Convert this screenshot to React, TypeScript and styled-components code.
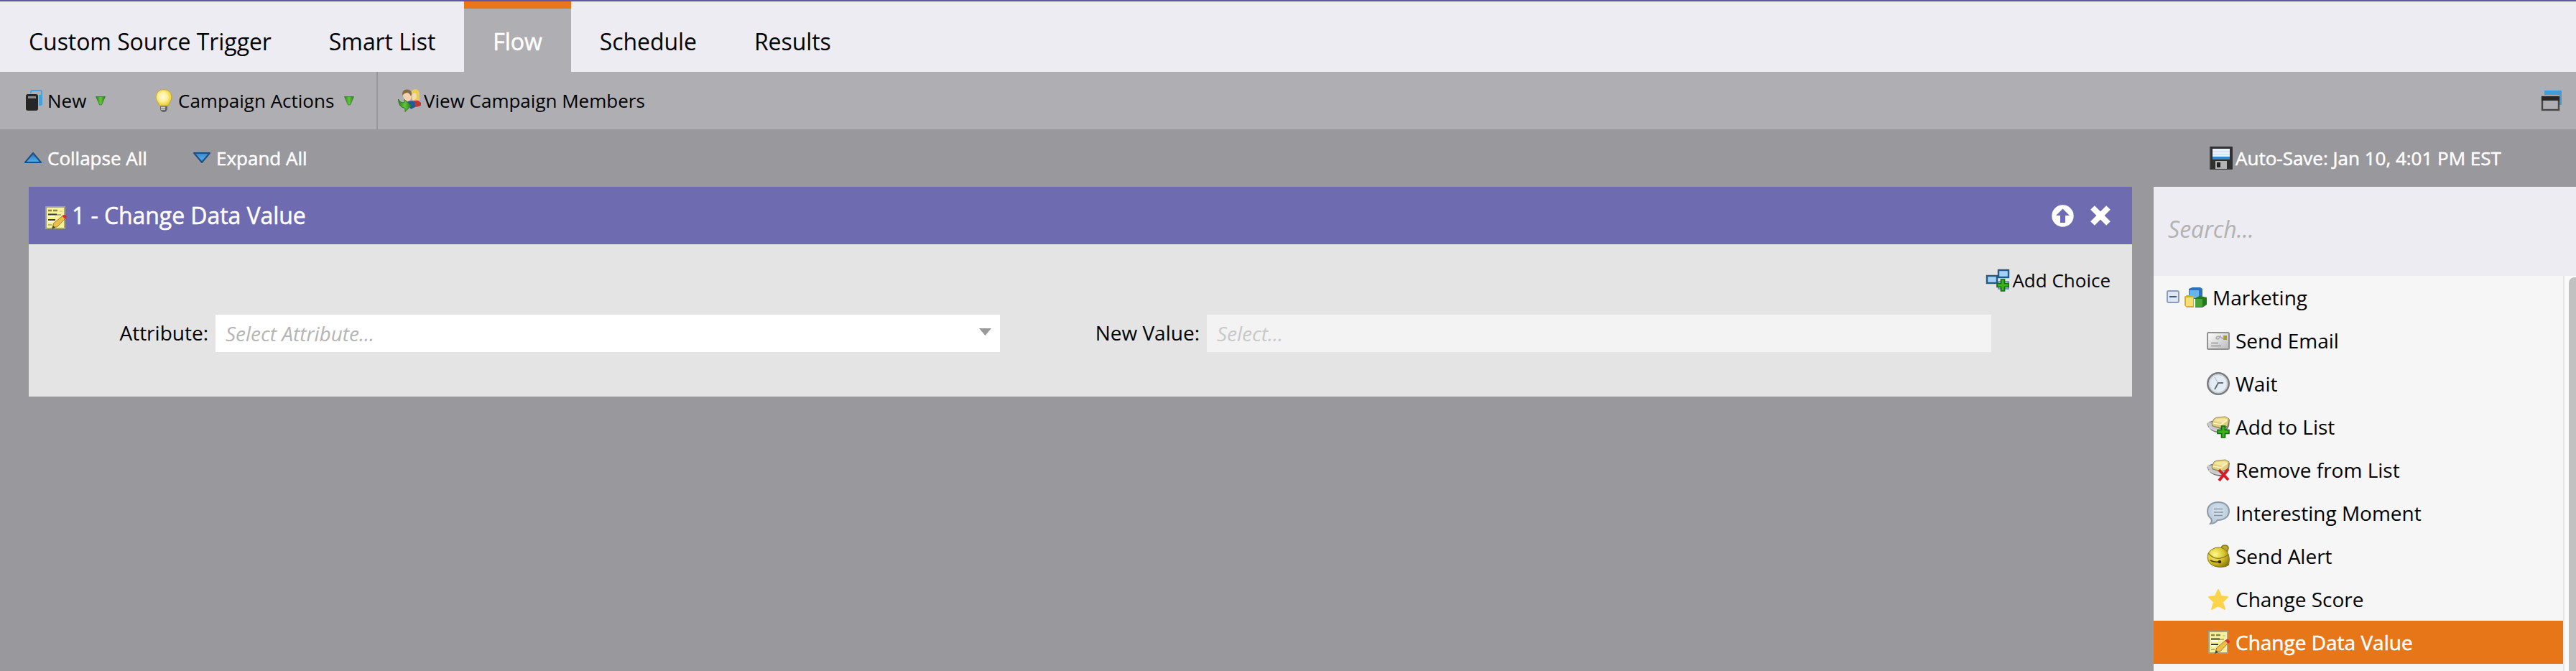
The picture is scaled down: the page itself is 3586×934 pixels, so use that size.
import React from "react";
import styled, { createGlobalStyle } from "styled-components";

const Global = createGlobalStyle`
  * { box-sizing: border-box; }
  body { margin: 0; background: #99989d; font-family: "Open Sans", sans-serif; color: #000; overflow: hidden; }
  svg { display: block; flex: none; overflow: visible; }
`;

const Page = styled.div`
  width: 3586px; height: 934px; display: flex; flex-direction: column; background: #99989d; overflow: hidden;
`;
const TabBar = styled.nav`
  height: 100px; flex: none; display: flex; background: #edecf2; border-top: 2px solid #6156a5;
`;
const Tab = styled.div<{ $active?: boolean }>`
  height: 98px; padding: ${p => (p.$active ? "20px" : "30px")} 40px 0; font-size: 32px; line-height: 52px; white-space: nowrap;
  letter-spacing: -0.07px;
  ${p => p.$active && "background: #afaeb3; border-top: 10px solid #e77619; color: #fff; -webkit-text-stroke: 0.5px #fff;"}
`;
const Toolbar = styled.div`
  height: 80px; flex: none; display: flex; align-items: center; background: #afaeb3; font-size: 26px; padding-right: 19px;
`;
const Tool = styled.div<{ $pl: number; $gap: number; $w?: number }>`
  display: flex; align-items: center; height: 80px; white-space: nowrap;
  padding-left: ${p => p.$pl}px; gap: ${p => p.$gap}px; ${p => p.$w && `width: ${p.$w}px;`}
`;
const Arrow = styled.svg` margin-left: 6px; `;
const Triangle = styled.svg` margin-bottom: 2px; `;
const Divider = styled.div` width: 2px; height: 80px; background: #99989d; `;
const Spacer = styled.div` flex: 1; `;
const SubBar = styled.div`
  height: 80px; flex: none; display: flex; align-items: center; font-size: 26px; color: #fff; -webkit-text-stroke: 0.5px #fff;
`;
const Main = styled.div` flex: 1; display: flex; align-items: flex-start; padding-left: 40px; gap: 30px; `;
const Card = styled.section` width: 2928px; height: 292px; background: #e4e4e4; `;
const CardHead = styled.header`
  height: 80px; background: #6f6bb0; color: #fff; display: flex; align-items: center; padding: 0 29px 0 21px;
  font-size: 32px; -webkit-text-stroke: 0.5px #fff;
`;
const HeadIcon = styled.div` padding-top: 6px; `;
const Title = styled.span` margin: -1px 0 0 7px; letter-spacing: -0.07px; `;
const HeadActions = styled.div` margin-left: auto; display: flex; align-items: center; gap: 22px; `;
const Choice = styled.div`
  display: flex; justify-content: flex-end; align-items: center; gap: 4px; height: 98px; padding: 2px 30px 0 0; font-size: 26px;
`;
const Fields = styled.div` display: flex; height: 52px; font-size: 28px; line-height: 50px; white-space: nowrap; `;
const Label = styled.label<{ $w: number }>` width: ${p => p.$w}px; text-align: right; padding-right: 10px; `;
const Field = styled.div<{ $disabled?: boolean }>`
  width: 1092px; height: 52px; padding: 0 12px 1px 14px; display: flex; align-items: center; justify-content: space-between;
  background: ${p => (p.$disabled ? "#f3f3f3" : "#fff")}; color: ${p => (p.$disabled ? "#c9c9c9" : "#b5b5b5")}; font-style: italic;
`;
const Caret = styled.svg` margin-bottom: 3px; `;
const Side = styled.aside` width: 588px; height: 674px; display: flex; flex-direction: column; background: #f6f6f6; `;
const Search = styled.div`
  height: 124px; flex: none; background: #edecf2; padding: 0 20px 7px; display: flex; align-items: center;
  font-size: 32px; font-style: italic; color: #b2b2b2;
`;
const Tree = styled.div` flex: 1; display: flex; `;
const Items = styled.div` width: 570px; `;
const Item = styled.div<{ $root?: boolean; $selected?: boolean }>`
  height: 60px; display: flex; align-items: center; font-size: 28px; gap: 8px;
  padding-left: ${p => (p.$root ? 18 : 74)}px;
  ${p => p.$selected && "background: #e77619; color: #fff; -webkit-text-stroke: 0.5px #fff;"}
`;
const Toggle = styled.svg` margin: 0 -2px 2px 0; `;
const Track = styled.div` width: 18px; border-left: 2px solid #e6e6e6; background: #fafafa; padding: 2px 0 0 6px; `;
const Thumb = styled.div` height: 560px; background: #c1c1c1; border-top-left-radius: 8px; `;

const Defs = () => (
  <svg width="0" height="0" aria-hidden>
    <defs>
      <linearGradient id="green" x2="1"><stop stopColor="#2c7f19" /><stop offset=".5" stopColor="#62c73c" /><stop offset="1" stopColor="#2a7a18" /></linearGradient>
      <linearGradient id="blue" x2="0" y2="1"><stop stopColor="#2a6db0" /><stop offset="1" stopColor="#58b4f2" /></linearGradient>
      <linearGradient id="blueD" x2="0" y2="1"><stop stopColor="#3f86c4" /><stop offset=".6" stopColor="#4fa6e8" /><stop offset="1" stopColor="#2a6db0" /></linearGradient>
      <radialGradient id="bulb" cx=".45" cy=".45" r=".6"><stop stopColor="#fffbe0" /><stop offset=".45" stopColor="#fff19a" /><stop offset="1" stopColor="#e6c81e" /></radialGradient>
      <radialGradient id="gold" cx=".35" cy=".35" r=".8"><stop stopColor="#fffa8c" /><stop offset=".5" stopColor="#d9c52c" /><stop offset="1" stopColor="#7d6a0c" /></radialGradient>
      <linearGradient id="silver" x2="1" y2="1"><stop stopColor="#ffffff" /><stop offset="1" stopColor="#b9b9b9" /></linearGradient>
      <radialGradient id="bubble" cx=".5" cy=".4" r=".6"><stop stopColor="#dbe6f0" /><stop offset="1" stopColor="#b4c6d6" /></radialGradient>
    </defs>
  </svg>
);

const NewIcon = () => (
  <svg width="24" height="30" viewBox="0 0 24 30">
    <path d="M8 5V3q0-2 2-2h11q2 0 2 2v4" fill="none" stroke="#4ea2d8" strokeWidth="2" />
    <path d="M19 7h5v13q0 2-2 2h-3z" fill="#46a0da" />
    <rect x="1" y="6" width="17" height="23" rx="3" fill="#262626" />
    <rect x="4" y="9" width="11" height="3" fill="#8b8b8d" />
  </svg>
);
const GreenArrow = () => (
  <Arrow width="14" height="13" viewBox="0 0 14 13"><path d="M.5.5h13L8.500 12h-3z" fill="url(#green)" stroke="#3c8030" strokeWidth=".8" /></Arrow>
);
const Bulb = () => (
  <svg width="24" height="32" viewBox="0 0 24 32">
    <path d="M7 23h10v5q-1 4-5 4t-5-4z" fill="#66666a" /><path d="M8 25.500h6M8 28h6" stroke="#dcdcdc" strokeWidth="1.400" />
    <path d="M12 .7c6.500 0 11 4.500 11 10.500 0 5-3.500 7-5 12H6C4.500 18 1 16 1 11.200 1 5.200 5.500.7 12 .7z" fill="url(#bulb)" stroke="#c3a934" />
  </svg>
);
const Members = () => (
  <svg width="32" height="32" viewBox="0 0 32 32">
    <path d="M19 3q2-3 6-3 5 1 5 8v8H20z" fill="#e8cf52" /><path d="M20 7q3-3 5-1l1 6q-3 5-6 2z" fill="#f6dcb4" />
    <path d="M20 18q3-3 8-2l4 3v4q-5 3-12 1z" fill="#b93a34" />
    <path d="M12 18q6-3 11-1l1 8-6 3z" fill="#1f5a9c" />
    <path d="M7 8q4-4 11-3l1 6q-2 6-6 6-6-2-6-9z" fill="#f2d3ad" />
    <path d="M6 9Q5 1 12 .5 19 0 19 7l-1 3q-2-5-6-5-4 1-6 4z" fill="#866a48" />
    <path d="M.5 14q2 5 8.500 5v-4.500l9.500 8.500-8.500 8.500v-5Q1 26 .5 14z" fill="url(#green)" stroke="#2a7d1c" />
  </svg>
);
const Windows = () => (
  <svg width="30" height="30" viewBox="0 0 30 30">
    <path d="M5 8V2q0-1 1-1h22q1 0 1 1v19h-3V7H5z" fill="#429cd8" />
    <rect x="2" y="10" width="23" height="18" fill="none" stroke="#464646" strokeWidth="2.400" /><path d="M1 9h25v6H1z" fill="#262626" />
  </svg>
);
const BlueTriangle = ({ down }: { down?: boolean }) => (
  <Triangle width="24" height="15" viewBox="0 0 24 15">
    <path d={down ? "M1 1h22L12 14z" : "M1 14h22L12 1z"} fill={down ? "url(#blueD)" : "url(#blue)"} stroke="#1e4f7e" strokeWidth="2" strokeLinejoin="round" />
  </Triangle>
);
const Floppy = () => (
  <svg width="32" height="32" viewBox="0 0 32 32">
    <rect width="32" height="32" rx="1" fill="#303030" /><path d="M1 1v30" stroke="#555" />
    <path d="M4 3h24v15H4z" fill="#eaf3fb" /><path d="M4 14h24v4H4z" fill="#3189ce" /><path d="M4 7h24M4 11h24" stroke="#bcdaf2" />
    <path d="M8 20h16v11H8z" fill="#b4b4b4" /><rect x="10" y="22" width="5" height="7" fill="#222" />
  </svg>
);
const Note = () => (
  <svg width="32" height="32" viewBox="0 0 32 32">
    <rect x="3" y="1" width="26" height="30" fill="#f6f19c" stroke="#a3a184" strokeWidth="2" />
    <path d="M6 6h5m2 0h6" stroke="#8a864d" strokeWidth="2.600" /><path d="M22 7h4" stroke="#d9d27c" strokeWidth="1.500" />
    <path d="M6 14h10M6 21h7" stroke="#fffef0" strokeWidth="2" />
    <path d="M6 11.500h12M6 19h10" stroke="#3a3a30" strokeWidth="2.200" /><path d="M18 12h6M6 26h5" stroke="#a29d60" strokeWidth="1.600" />
    <path d="M12 30l1.500-6L26 13.500l4 3.500-11 11.500z" fill="#edbf48" stroke="#8a671e" strokeWidth=".8" />
    <path d="M25.500 13.500q3-3 5-1t1 4l-2 1.500z" fill="#cf3238" /><path d="M11 32l2-5 3 3z" fill="#444" />
  </svg>
);
const Plus = ({ x = 0, y = 0 }) => (
  <path transform={`translate(${x} ${y})`} d="M6.500 1h5v5.500H17v5h-5.500V17h-5v-5.500H1v-5h5.500z" fill="#3cb21a" stroke="#16680c" strokeWidth="1.600" />
);
const AddChoice = () => (
  <svg width="32" height="32" viewBox="0 0 32 32">
    <rect x="17" y="2" width="14" height="10" fill="#a2d1f6" stroke="#235a88" strokeWidth="2.400" />
    <rect x="1" y="10" width="14" height="10" fill="#a2d1f6" stroke="#235a88" strokeWidth="2.400" />
    <rect x="17" y="18" width="14" height="10" fill="#c4e0f4" stroke="#6b9cc2" strokeWidth="2" /><Plus x={14} y={14} />
  </svg>
);
const UpCircle = () => (
  <svg width="31" height="31" viewBox="0 0 31 31"><circle cx="15.500" cy="15.500" r="15.200" fill="#fff" /><path d="M15.500 5.500l9.500 9.500h-6v10h-7V15H6z" fill="#6f6bb0" /></svg>
);
const Cross = () => (
  <svg width="30" height="30" viewBox="0 0 30 30"><path d="M4 4l22 22M26 4L4 26" stroke="#fff" strokeWidth="8" /></svg>
);
const Minus = () => (
  <Toggle width="18" height="18" viewBox="0 0 18 18"><rect x="1" y="1" width="16" height="16" rx="2" fill="#dfe6f2" stroke="#8b9dbd" strokeWidth="2" /><path d="M4 9h10" stroke="#44587e" strokeWidth="2" /></Toggle>
);
const Cubes = () => (
  <svg width="32" height="32" viewBox="0 0 32 32">
    <path d="M7 4l5-2h11l3 2v11l-3 3H9l-2-2z" fill="#2b73ba" /><path d="M8 6h13v11H8z" fill="#69b3ee" />
    <path d="M1 15l3-2h10v17H4l-3-3z" fill="#d2ae26" /><path d="M3 16h10v12H3z" fill="#f7df77" />
    <path d="M16 17l6-3 10 2v10l-6 4H16z" fill="#237a1a" /><path d="M16 18h10v11H16z" fill="#48a437" />
  </svg>
);
const Mail = () => (
  <svg width="32" height="32" viewBox="0 0 32 32">
    <rect x="1" y="5" width="30" height="23" rx="1.500" fill="url(#silver)" stroke="#909090" strokeWidth="2" />
    <rect x="23" y="9" width="5" height="6" fill="#a89c27" /><path d="M6 19.500h10M6 23.500h14" stroke="#999" strokeWidth="1.600" /><path d="M20 11q-7-2-7 2 3 3 6-3 3 6 5 1" stroke="#aaaab0" fill="none" strokeWidth="1.500" />
  </svg>
);
const Clock = () => (
  <svg width="32" height="32" viewBox="0 0 32 32">
    <circle cx="16" cy="16" r="14.700" fill="#e4edf5" stroke="#77797c" strokeWidth="2.600" /><circle cx="16" cy="16" r="12.500" fill="none" stroke="#c9ccd0" strokeWidth="1.500" />
    <path d="M16 16L11 7" stroke="#bcc9d5" strokeWidth="1.500" /><path d="M23 15h-7l-5 9" stroke="#6b7178" strokeWidth="2" fill="none" />
  </svg>
);
const Disk = ({ remove }: { remove?: boolean }) => (
  <svg width="32" height="32" viewBox="0 0 32 32">
    <path d="M0 12q5-5 14-5l18-1-1 9q-4 11-14 10Q4 23 0 12z" fill="#77777a" />
    <path d="M0 11q4-2 9-1l-2 5 12 4 9-2q-3 6-12 5Q3 19 0 11z" fill="#c9c9c9" />
    <path d="M3 16q7 7 18 6" stroke="#dedede" strokeWidth="1.500" fill="none" />
    <path d="M7 12l3-7 4-2 12-1 5 3-2 10-8 3-12-3z" fill="#e0cf80" stroke="#9c8f58" />
    <path d="M10 8l3-3 12-1 4 2-6 5z" fill="#f4e6a0" /><path d="M9 11l11 2 8-6" stroke="#fff6c4" strokeWidth="1.600" fill="none" />
    {remove ? <path d="M17 16l13 14M30 15L17 31" stroke="#cf2028" strokeWidth="4" /> : <Plus x={14} y={14} />}
  </svg>
);
const Bubble = () => (
  <svg width="32" height="32" viewBox="0 0 32 32">
    <path d="M16 1c9 0 15 5 15 12.500S25 26 15 26c-2 3-6 5-10 5q3-3 1-7-5-4-5-10.500C1 6 7 1 16 1z" fill="url(#bubble)" stroke="#8c9aa8" strokeWidth="2" />
    <path d="M10 10.500h12M10 15h13M10 19.500h12" stroke="#8493a3" strokeWidth="1.600" />
  </svg>
);
const Bell = () => (
  <svg width="32" height="32" viewBox="0 0 32 32">
    <path d="M20 7q0-6 5-6 5 0 5 4l-2 6" fill="#b9a82c" stroke="#857617" strokeWidth="1.600" />
    <path d="M1 18Q1 8 12 4.500q9-2 15 4 4 4 4.500 12l-1 8q-4 3-13 3Q2 30 1 18z" fill="url(#gold)" stroke="#8a7a19" />
    <path d="M2 12q8 9 17 7 8-2 11-5" stroke="#8d7c17" strokeWidth="1.400" fill="none" /><path d="M5 22q8 4 14 1" stroke="#463b06" strokeWidth="1.500" fill="none" /><circle cx="18" cy="24" r="2.200" fill="#302800" />
  </svg>
);
const Star = () => (
  <svg width="32" height="32" viewBox="0 0 32 32"><path d="M16 3l4 9 9 1-7 7 3 10-9-5-9 5 3-10-7-7 9-1z" fill="#fdd34d" stroke="#fdd34d" strokeWidth="2" strokeLinejoin="round" /></svg>
);

const actions: [string, React.ReactNode][] = [
  ["Send Email", <Mail />], ["Wait", <Clock />], ["Add to List", <Disk />], ["Remove from List", <Disk remove />],
  ["Interesting Moment", <Bubble />], ["Send Alert", <Bell />], ["Change Score", <Star />], ["Change Data Value", <Note />],
];

export default function App() {
  return (
    <Page>
      <Global />
      <TabBar>
        {["Custom Source Trigger", "Smart List", "Flow", "Schedule", "Results"].map(t => <Tab key={t} $active={t === "Flow"}>{t}</Tab>)}
      </TabBar>
      <Toolbar>
        <Tool $pl={35} $gap={7} $w={215}><NewIcon /><span>New</span><GreenArrow /></Tool>
        <Tool $pl={1} $gap={8} $w={309}><Bulb /><span>Campaign Actions</span><GreenArrow /></Tool>
        <Divider />
        <Tool $pl={28} $gap={4}><Members /><span>View Campaign Members</span></Tool>
        <Spacer />
        <Windows />
      </Toolbar>
      <SubBar>
        <Tool $pl={34} $gap={8} $w={269}><BlueTriangle /><span>Collapse All</span></Tool>
        <Tool $pl={0} $gap={8}><BlueTriangle down /><span>Expand All</span></Tool>
        <Spacer />
        <Tool $pl={0} $gap={4} $w={510}><Floppy /><span>Auto-Save: Jan 10, 4:01 PM EST</span></Tool>
      </SubBar>
      <Main>
        <Card>
          <CardHead>
            <HeadIcon><Note /></HeadIcon><Title>1 - Change Data Value</Title>
            <HeadActions><UpCircle /><Cross /></HeadActions>
          </CardHead>
          <Choice><AddChoice /><span>Add Choice</span></Choice>
          <Fields>
            <Label $w={260}>Attribute:</Label>
            <Field>Select Attribute...<Caret width="17" height="10" viewBox="0 0 17 10"><path d="M0 0h17L8.500 10z" fill="#999" /></Caret></Field>
            <Label $w={288}>New Value:</Label>
            <Field $disabled>Select...</Field>
          </Fields>
        </Card>
        <Side>
          <Search>Search...</Search>
          <Tree>
            <Items>
              <Item $root><Minus /><Cubes /><span>Marketing</span></Item>
              {actions.map(([name, icon]) => <Item key={name} $selected={name === "Change Data Value"}>{icon}<span>{name}</span></Item>)}
            </Items>
            <Track><Thumb /></Track>
          </Tree>
        </Side>
      </Main>
      <Defs />
    </Page>
  );
}
